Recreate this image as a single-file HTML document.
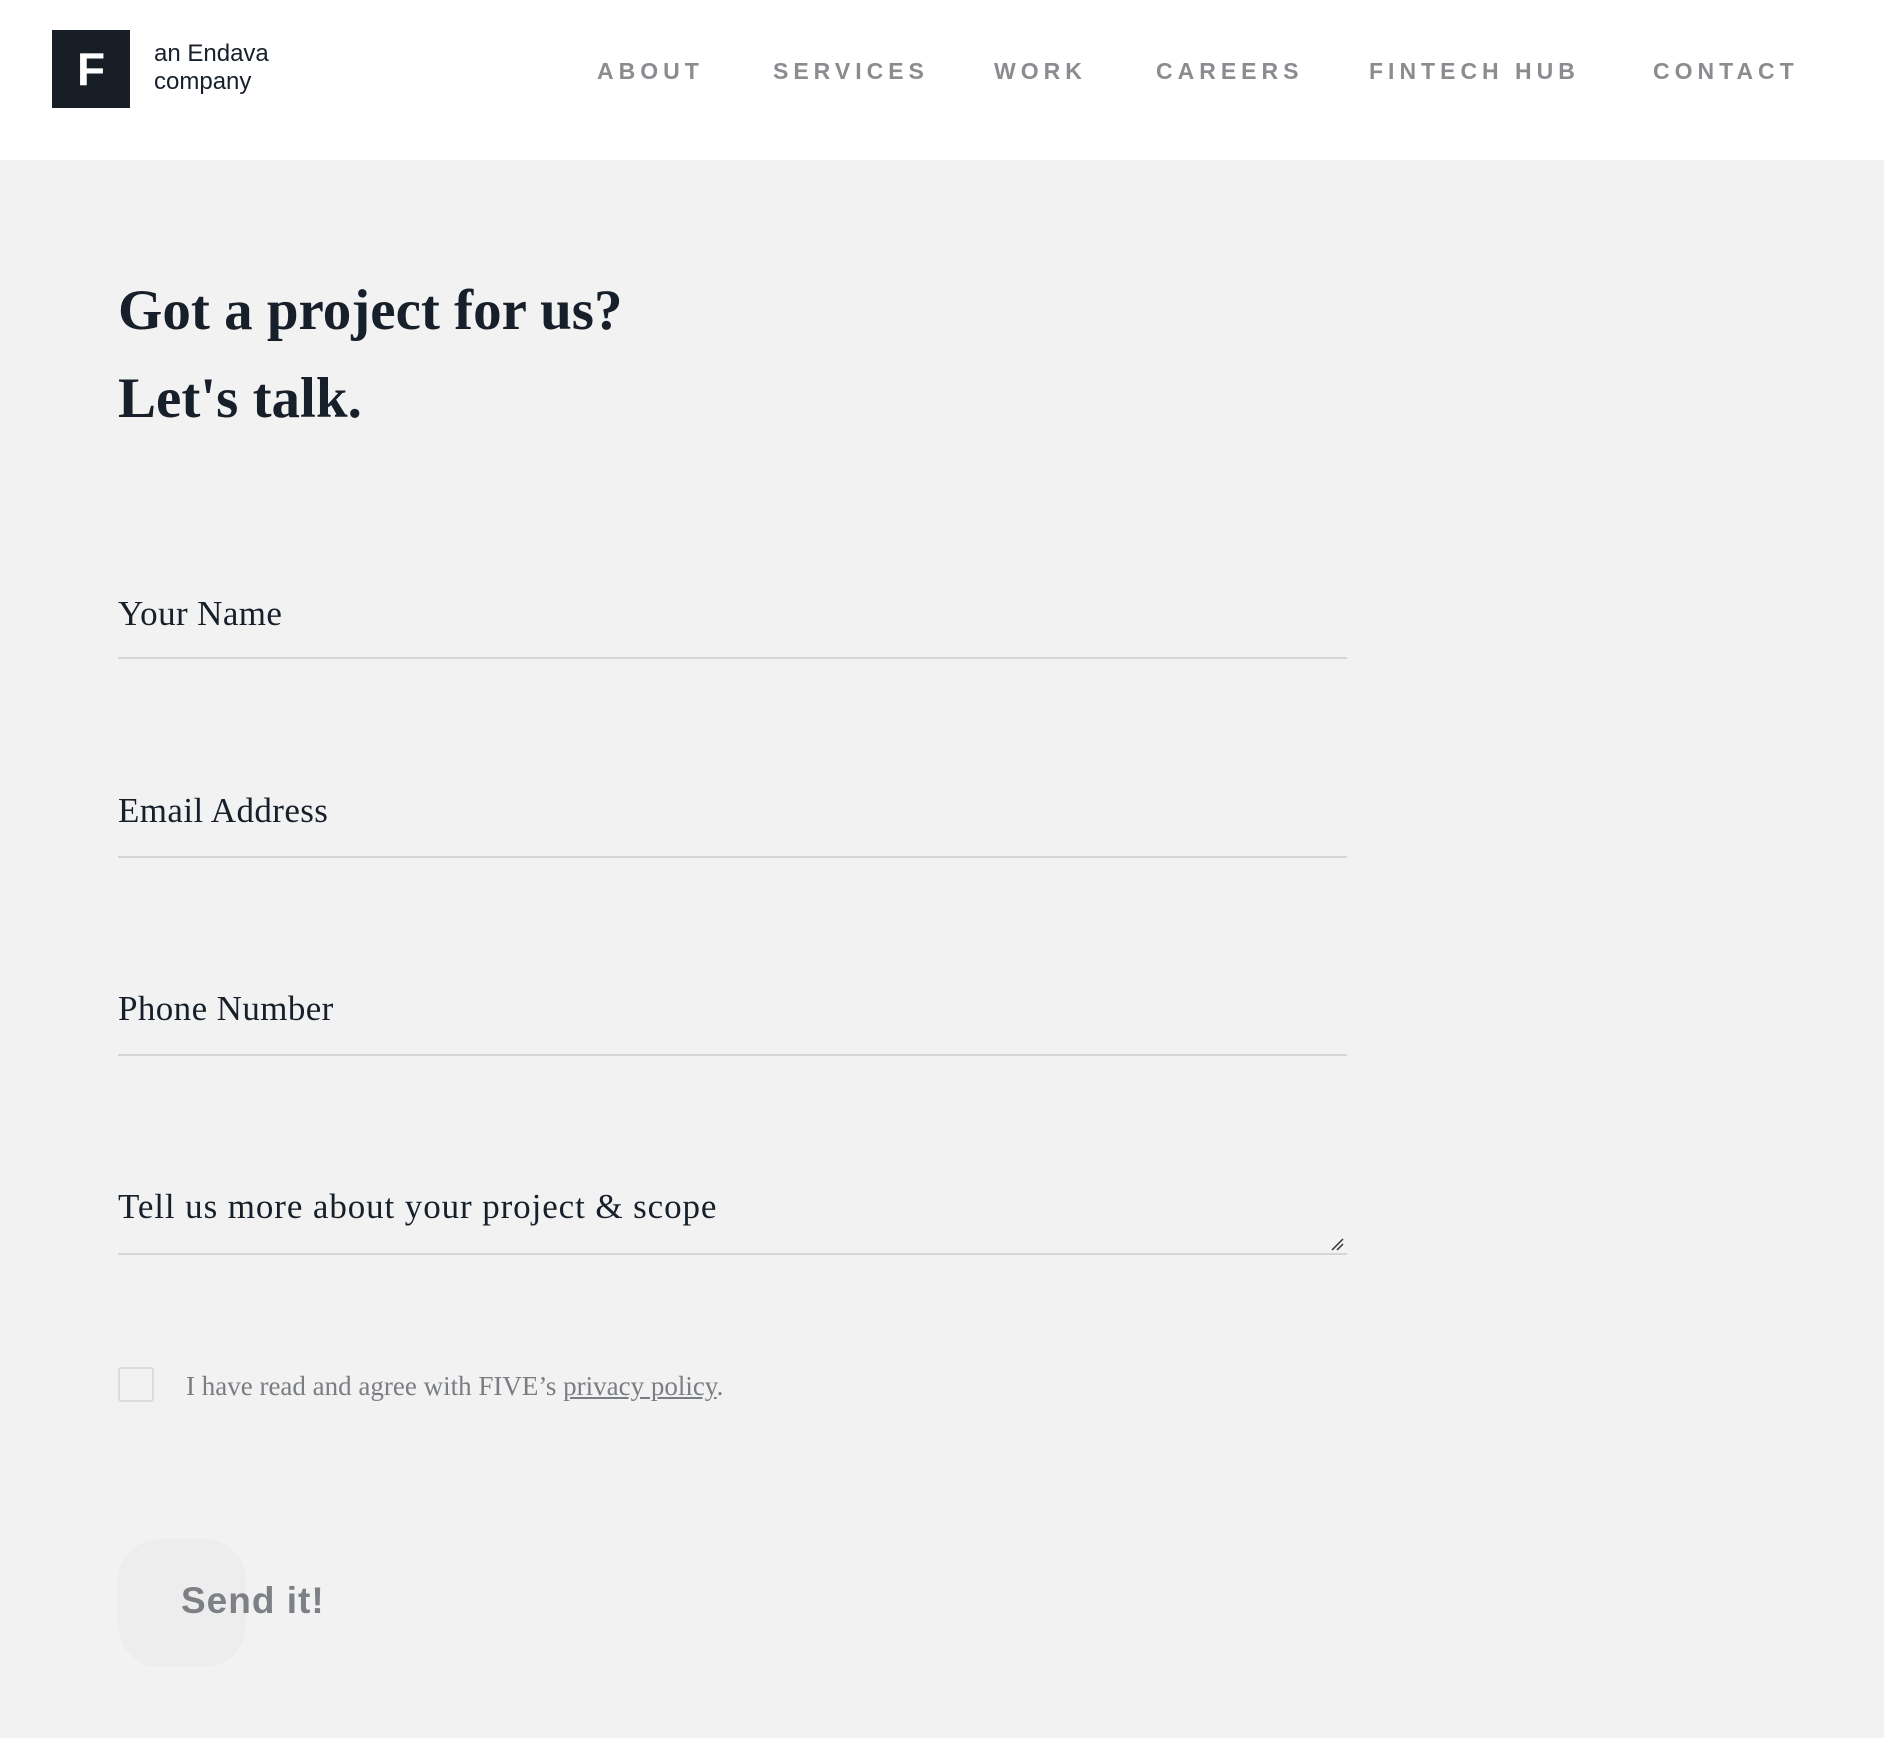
<!DOCTYPE html>
<html><head><meta charset="utf-8"><style>
*{margin:0;padding:0;box-sizing:border-box}
body{width:1884px;height:1738px;background:#f2f2f2;position:relative;overflow:hidden;font-family:"Liberation Serif",serif;color:#17202a}
.hdr{position:absolute;left:0;top:0;width:1884px;height:160px;background:#fff}
.logo{position:absolute;left:52px;top:30px;width:78px;height:78px;background:#171e25;color:#fff;font:bold 46px "Liberation Sans",sans-serif;text-align:center;line-height:78px}
.lt{position:absolute;left:154px;top:40px;font:24px/28px "Liberation Sans",sans-serif;color:#17202a}
.nav{position:absolute;top:58px;font:bold 23px "Liberation Sans",sans-serif;letter-spacing:5px;color:#8a8c90;white-space:nowrap}
h1{position:absolute;left:118px;font-weight:bold;font-size:57px;white-space:nowrap}
.lab{position:absolute;left:118px;font-size:35px;white-space:nowrap;letter-spacing:0.4px}
.line{position:absolute;left:118px;width:1229px;height:2px;background:#d6d6d6}
</style></head><body>
<div class="hdr">
<div class="logo">F</div>
<div class="lt">an Endava<br>company</div>
<div class="nav" style="left:597px">ABOUT</div>
<div class="nav" style="left:773px">SERVICES</div>
<div class="nav" style="left:994px">WORK</div>
<div class="nav" style="left:1156px">CAREERS</div>
<div class="nav" style="left:1369px">FINTECH HUB</div>
<div class="nav" style="left:1653px">CONTACT</div>
</div>
<h1 style="top:278px">Got a project for us?</h1>
<h1 style="top:366px">Let's talk.</h1>
<div class="lab" style="top:594px">Your Name</div><div class="line" style="top:657px"></div>
<div class="lab" style="top:791px">Email Address</div><div class="line" style="top:856px"></div>
<div class="lab" style="top:989px">Phone Number</div><div class="line" style="top:1054px"></div>
<div class="lab" style="top:1187px;letter-spacing:0.9px">Tell us more about your project &amp; scope</div><div class="line" style="top:1253px"></div>
<svg style="position:absolute;left:1330px;top:1237px" width="14" height="14"><path d="M2 13L13 2M7 13L13 7" stroke="#333" stroke-width="1.5"/></svg>
<div style="position:absolute;left:118px;top:1367px;width:36px;height:35px;border:2px solid #dcdcdc;border-radius:3px"></div>
<div style="position:absolute;left:186px;top:1371px;font-size:27px;color:#7a7d82;white-space:nowrap">I have read and agree with FIVE’s <u>privacy policy</u>.</div>
<div style="position:absolute;left:118px;top:1539px;width:128px;height:128px;border-radius:42px;background:#ededed"></div>
<div style="position:absolute;left:181px;top:1580px;font:bold 37px 'Liberation Sans',sans-serif;color:#7d8085;letter-spacing:1px">Send it!</div>
</body></html>
